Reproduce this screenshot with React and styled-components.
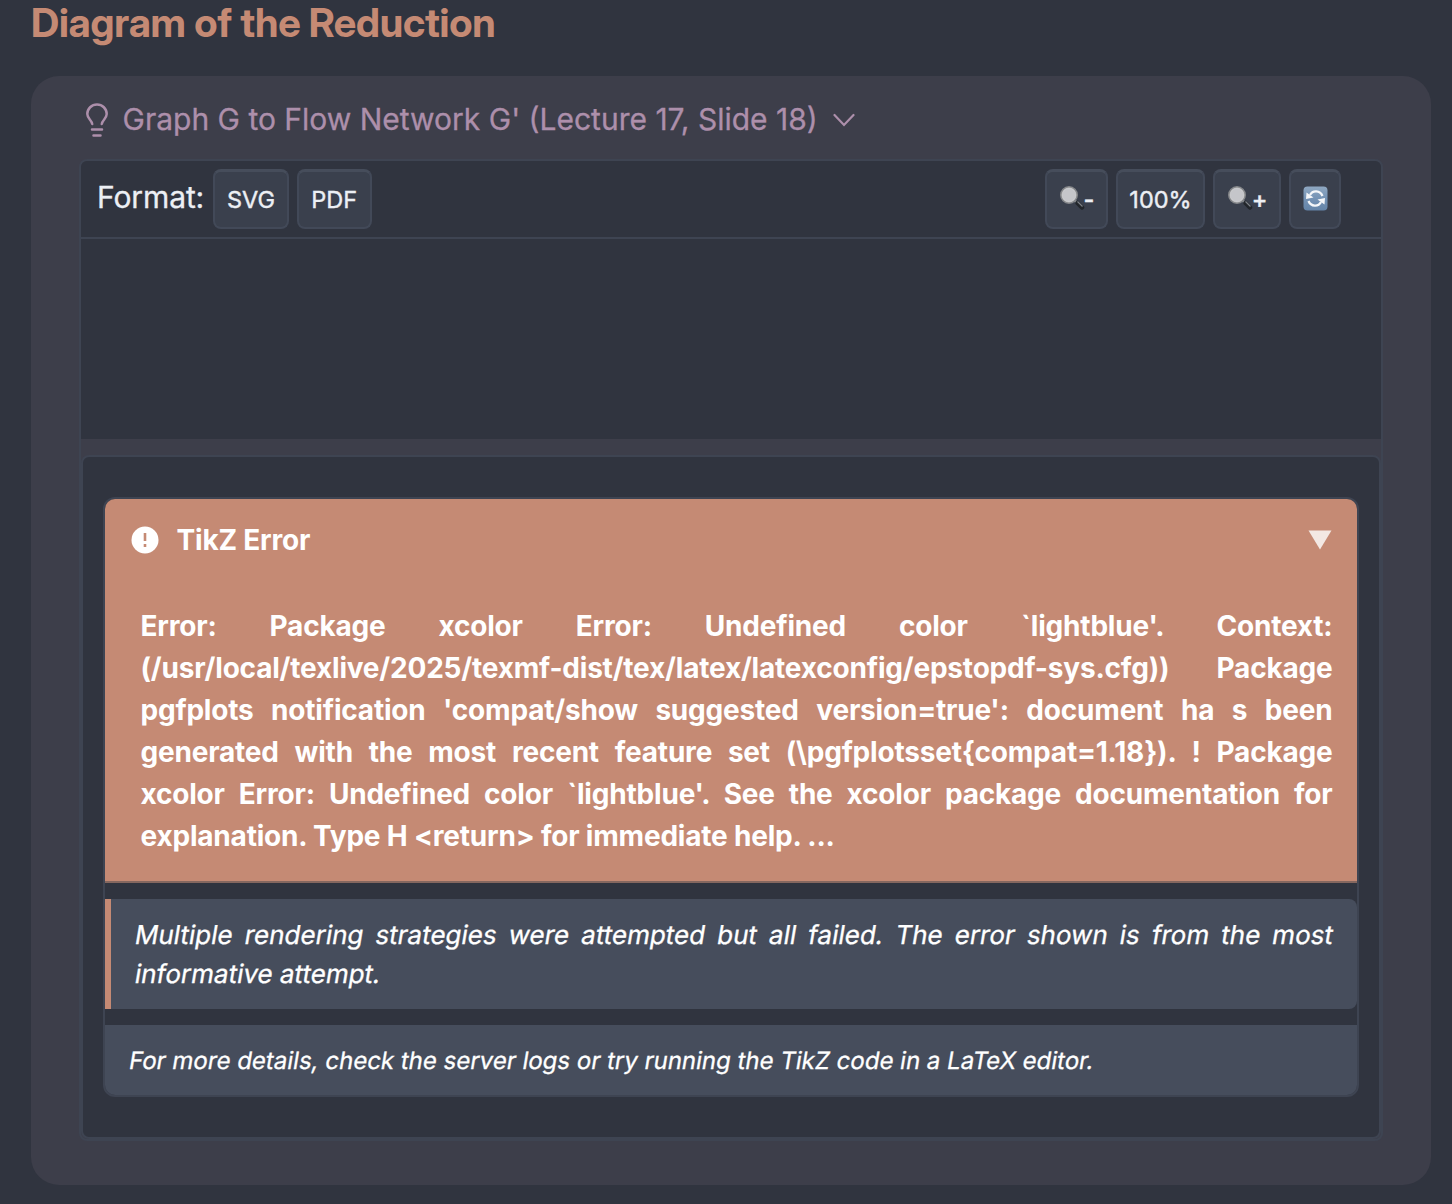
import React from "react";
import styled, { createGlobalStyle } from "styled-components";

const c = {
  page: "#30343f",
  callout: "#3d3e4a",
  line: "#3e4452",
  button: "#3a404d",
  note: "#464d5c",
  orange: "#c58a74",
  mauve: "#ad8fab",
  text: "#eceff4",
};

const Global = createGlobalStyle`
  * { box-sizing: border-box; }
  body {
    margin: 0;
    background: ${c.page};
    color: ${c.text};
    font-family: Inter, "Liberation Sans", sans-serif;
    -webkit-text-stroke: 0.3px currentColor;
    overflow: hidden;
  }
`;

const Page = styled.main`
  height: 1204px;
  padding: 0 21px 0 31px;
`;

const Heading = styled.h2`
  margin: 0;
  height: 76px;
  font-family: "Inter Display", Inter, sans-serif;
  font-size: 40px;
  line-height: 46px;
  font-weight: 700;
  letter-spacing: -0.17px;
  color: ${c.orange};
  -webkit-text-stroke: 0;
`;

const Callout = styled.section`
  height: 1109px;
  padding: 24px 48px;
  border-radius: 28px;
  background: ${c.callout};
`;

const CalloutTitle = styled.div`
  display: flex;
  align-items: center;
  height: 39px;
  margin: 0 0 20px 6px;
  color: ${c.mauve};
  font-size: 30px;
  line-height: 36px;
  white-space: nowrap;
  svg { flex: none; }
`;

const TitleText = styled.span`
  margin: 0 15px 1px 13.5px;
`;

const Frame = styled.div`
  height: 982px;
  border: 2px solid ${c.line};
  border-radius: 8px;
  overflow: hidden;
`;

const Toolbar = styled.div`
  display: flex;
  justify-content: space-between;
  height: 78px;
  padding: 8px 40px 8px 16px;
  border-bottom: 2px solid ${c.line};
  background: ${c.page};
`;

const Group = styled.div`
  display: flex;
  gap: 8px;
`;

const Label = styled.span`
  width: 108.3px;
  font-size: 30px;
  line-height: 57px;
  letter-spacing: -0.1px;
  white-space: nowrap;
`;

const Button = styled.button`
  display: flex;
  align-items: center;
  justify-content: center;
  width: ${(p) => p.$w}px;
  height: 60px;
  padding: 0;
  border: 2px solid #424958;
  border-top: 3px solid #464d5b;
  border-radius: 8px;
  background: ${c.button};
  color: ${c.text};
  font: 400 23.5px Inter, "Liberation Sans", sans-serif;
  -webkit-text-stroke: 0.4px currentColor;
  svg { margin-bottom: 3px; }
`;

const Sign = styled.span`
  margin: 0 0 1px -1px;
  font-weight: 500;
`;

const Viewport = styled.div`
  height: 200px;
  background: ${c.page};
`;

const ErrorBox = styled.div`
  height: 684px;
  margin-top: 16px;
  padding: 40px 20px;
  border: 2px solid ${c.line};
  border-radius: 8px;
  background: ${c.page};
`;

const ErrorPanel = styled.article`
  height: 600px;
  border: 2px solid ${c.line};
  border-radius: 12px;
  overflow: hidden;
  color: #fff;
`;

const ErrorBody = styled.div`
  height: 384px;
  background: ${c.orange};
  border-bottom: 2px solid #85675f;
  font-size: 28px;
  font-weight: 700;
  letter-spacing: -0.2px;
  -webkit-text-stroke: 0;
`;

const ErrorHeader = styled.header`
  display: flex;
  align-items: center;
  height: 82px;
  padding: 0 25px 0 26px;
`;

const ErrorTitle = styled.span`
  flex: 1;
  margin-left: 17.5px;
`;

const Message = styled.p`
  margin: 24px 24.500px 0 35.5px;
  line-height: 42px;
  text-align: justify;
`;

const Slanted = styled.span`
  display: block;
  transform: skewX(-9.5deg);
  transform-origin: 0 70%;
  text-align-last: ${(p) => (p.$fill ? "justify" : "left")};
  white-space: nowrap;
`;

const Note = styled.p`
  height: 110px;
  margin: 16px 0;
  padding: 16px 25.500px 16px 22.500px;
  border-left: 6px solid ${c.orange};
  border-radius: 0 8px 8px 0;
  background: ${c.note};
  font-size: 26px;
  line-height: 39px;
`;

const Footer = styled.footer`
  height: 70px;
  padding: 0 24px 0 22px;
  background: ${c.note};
  font-size: 24px;
  line-height: 71px;
`;

const Bulb = () => (
  <svg width="24" height="36" viewBox="0 0 24 36" fill="none" stroke="currentColor" strokeWidth="2.5" strokeLinecap="round">
    <path d="M7.200 22C6.800 18 2.300 16.500 2.300 12.100a9.700 9.700 0 0 1 19.400 0c0 4.400-4.500 5.900-4.900 9.900" />
    <path d="M7 27.500h10M8.500 33.500h7" />
  </svg>
);

const Chevron = () => (
  <svg width="22" height="14" viewBox="0 0 22 14" fill="none" stroke="currentColor" strokeWidth="2.200" strokeLinecap="round">
    <path d="M1.500 2 11 12l9.500-10" />
  </svg>
);

const Magnifier = () => (
  <svg width="26" height="26" viewBox="0 0 26 26">
    <path d="m15 15 5 4.500" stroke="#8b8f94" strokeWidth="2.500" />
    <path d="m18.500 18 4.500 4.500" stroke="#22262b" strokeWidth="4.500" strokeLinecap="round" />
    <path d="m18.500 16.500 5 5" stroke="#7b8086" strokeWidth="1.200" />
    <circle cx="10" cy="10" r="8" fill="#c5c6ca" stroke="#85878a" strokeWidth="2" />
    <circle cx="10" cy="10" r="7" fill="none" stroke="#d7d7d8" strokeWidth=".7" />
  </svg>
);

const Refresh = () => (
  <svg width="25" height="25" viewBox="0 0 25 25">
    <defs>
      <linearGradient id="blue" x1="0" y1="0" x2="0" y2="1">
        <stop stopColor="#8fa8c2" />
        <stop offset=".5" stopColor="#7593b5" />
        <stop offset="1" stopColor="#6484a8" />
      </linearGradient>
    </defs>
    <rect x=".5" y=".5" width="24" height="24" rx="4" fill="url(#blue)" />
    <g fill="none" stroke="#f4f6f9" strokeWidth="2.300">
      <path d="M7 9c2.500-5 10-5 12.500 1M18 16c-2.500 5-10 5-12.500-1" />
    </g>
    <path d="M3.500 6.500 3 13l7.500-1.500zM21.500 18.500l.5-6.500-7.500 1.500z" fill="#f4f6f9" />
  </svg>
);

const Alert = () => (
  <svg width="28" height="28" viewBox="0 0 28 28">
    <circle cx="14" cy="14" r="13.500" fill="#fff" />
    <path d="M12.700 7h2.600v8h-2.600zM12.700 18h2.600v3h-2.600z" fill={c.orange} />
  </svg>
);

const Triangle = () => (
  <svg width="24" height="20" viewBox="0 0 24 20">
    <path d="M.5.500h23L12 19.500z" fill="#f3e8e3" />
  </svg>
);

export default function App() {
  return (
    <>
      <Global />
      <Page>
        <Heading>Diagram of the Reduction</Heading>
        <Callout>
          <CalloutTitle>
            <Bulb />
            <TitleText>Graph G to Flow Network G' (Lecture 17, Slide 18)</TitleText>
            <Chevron />
          </CalloutTitle>
          <Frame>
            <Toolbar>
              <Group>
                <Label>Format:</Label>
                <Button $w={75.4}>SVG</Button>
                <Button $w={74.9}>PDF</Button>
              </Group>
              <Group>
                <Button $w={63}><Magnifier /><Sign>-</Sign></Button>
                <Button $w={89}>100%</Button>
                <Button $w={68}><Magnifier /><Sign>+</Sign></Button>
                <Button $w={52}><Refresh /></Button>
              </Group>
            </Toolbar>
            <Viewport />
            <ErrorBox>
              <ErrorPanel>
                <ErrorBody>
                  <ErrorHeader>
                    <Alert />
                    <ErrorTitle>TikZ Error</ErrorTitle>
                    <Triangle />
                  </ErrorHeader>
                  <Message>
                    {"Error: Package xcolor Error: Undefined color `lightblue'. Context: (/usr/local/texlive/2025/texmf-dist/tex/latex/latexconfig/epstopdf-sys.cfg)) Package pgfplots notification 'compat/show suggested version=true': document ha s been generated with the most recent feature set (\\pgfplotsset{compat=1.18}). ! Package xcolor Error: Undefined color `lightblue'. See the xcolor package documentation for explanation. Type H <return> for immediate help. ..."}
                  </Message>
                </ErrorBody>
                <Note>
                  <Slanted $fill>Multiple rendering strategies were attempted but all failed. The error shown is from the most</Slanted>{" "}
                  <Slanted>informative attempt.</Slanted>
                </Note>
                <Footer>
                  <Slanted>For more details, check the server logs or try running the TikZ code in a LaTeX editor.</Slanted>
                </Footer>
              </ErrorPanel>
            </ErrorBox>
          </Frame>
        </Callout>
      </Page>
    </>
  );
}
